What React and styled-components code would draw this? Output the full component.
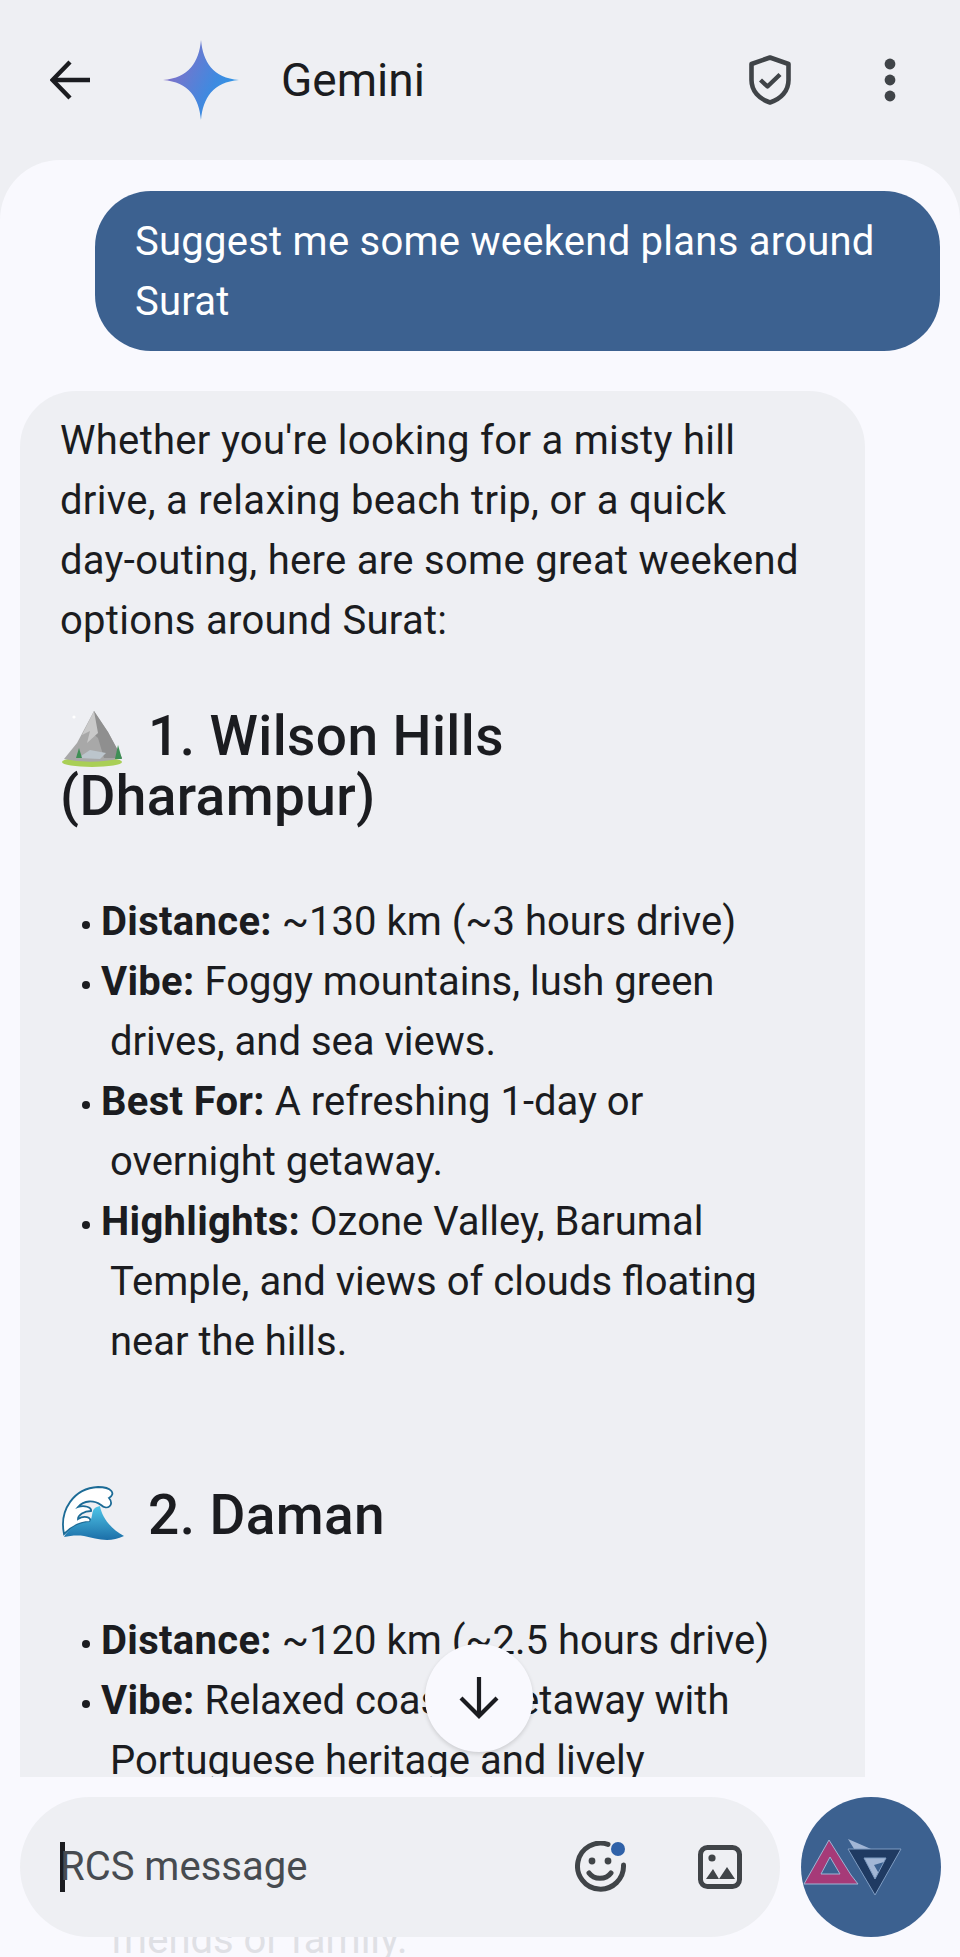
import React from "react";
import styled, { createGlobalStyle } from "styled-components";

const Global = createGlobalStyle`
  html, body { margin: 0; padding: 0; background: #eeeff3; }
  * { box-sizing: border-box; }
`;

const Page = styled.div`
  position: relative;
  width: 960px;
  height: 1957px;
  overflow: hidden;
  display: flex;
  flex-direction: column;
  background: #eeeff3;
  font-family: Roboto, Inter, sans-serif;
  color: #1b1c20;
`;

const Header = styled.header`
  height: 160px;
  flex: none;
  display: flex;
  align-items: center;
  padding-left: 50px;
`;

const IconSlot = styled.div`
  display: flex;
  flex: none;
  margin-left: ${(p) => p.$ml || 0}px;
  margin-right: ${(p) => p.$mr || 0}px;
`;

const Title = styled.h1`
  margin: 0 0 0 42px;
  font-size: 46px;
  line-height: 60px;
  font-weight: 400;
  flex: 1;
`;

const Sheet = styled.main`
  flex: 1;
  min-height: 0;
  overflow: hidden;
  background: #f9f9fe;
  border-radius: 60px 60px 0 0;
  padding: 31px 20px 0;
  display: flex;
  flex-direction: column;
  gap: 40px;
`;

const UserBubble = styled.div`
  align-self: flex-end;
  width: 845px;
  height: 160px;
  flex: none;
  padding: 21px 40px 19px;
  border-radius: 56px;
  background: #3c6190;
  color: #fff;
  font-size: 40px;
  line-height: 60px;
  letter-spacing: 0.25px;
`;

const BotBubble = styled.article`
  width: 845px;
  flex: none;
  padding: 20px 40px 40px;
  border-radius: 56px;
  background: #eeeff3;
  font-size: 40px;
  line-height: 60px;
`;

const Para = styled.p`
  margin: 0 0 55px;
  letter-spacing: 0.3px;
`;

const NoBreak = styled.span`
  white-space: nowrap;
`;

const Heading = styled.h2`
  margin: ${(p) => p.$mt || 0}px 0 66px;
  font-size: 55px;
  line-height: 60px;
  font-weight: 500;
  letter-spacing: 0.4px;
`;

const Emoji = styled.svg`
  display: inline-block;
  width: 64px;
  height: 64px;
  margin: -10px 24px -10px 0;
  vertical-align: -4px;
`;

const Bullets = styled.ul`
  list-style: none;
  margin: 0;
  padding: 0 40px 0 0;
`;

const Bullet = styled.li`
  padding-left: 50px;
  text-indent: -28px;
  &::before {
    content: "";
    display: inline-block;
    width: 8px;
    height: 8px;
    margin-right: 11px;
    border-radius: 50%;
    background: #1b1c20;
    vertical-align: 6px;
  }
  b {
    font-weight: 700;
    letter-spacing: 0.3px;
  }
`;

const Footer = styled.footer`
  position: absolute;
  left: 0;
  right: 0;
  bottom: 0;
  height: 180px;
  padding: 20px 20px 20px;
  background: #f9f9fe;
  display: flex;
  gap: 21px;
`;

const GhostLine = styled.div`
  position: absolute;
  left: 110px;
  top: 133px;
  font-size: 40px;
  line-height: 60px;
  color: #dfe0e5;
`;

const Composer = styled.div`
  position: relative;
  width: 760px;
  height: 140px;
  flex: none;
  border-radius: 70px;
  background: #eeeff3;
  display: flex;
  align-items: center;
  padding-left: 40px;
`;

const Caret = styled.span`
  width: 5px;
  height: 50px;
  flex: none;
  background: #1b1c20;
`;

const Placeholder = styled.span`
  flex: 1;
  margin-left: -5px;
  font-size: 40px;
  line-height: 60px;
  color: #474b50;
`;

const SendButton = styled.button`
  position: relative;
  width: 140px;
  height: 140px;
  flex: none;
  border: 0;
  padding: 0 38px 0 0;
  border-radius: 50%;
  background: #3c6190;
  display: flex;
  align-items: center;
  justify-content: center;
`;

const ScrollFab = styled.button`
  position: absolute;
  left: 425px;
  top: 1644px;
  width: 108px;
  height: 108px;
  border: 0;
  padding: 0;
  border-radius: 50%;
  background: #f9f9fe;
  box-shadow: 0 2px 4px rgba(0, 0, 0, 0.14);
  display: flex;
  align-items: center;
  justify-content: center;
`;

const Mountain = () => (
  <Emoji viewBox="0 0 64 64" aria-hidden="true">
    <ellipse cx="32" cy="57" rx="30" ry="5" fill="#a9cf56" />
    <path d="M4 54 L17 38 L34 6 L48 27 L62 53 Q32 60 4 54Z" fill="#a8a8a8" />
    <path d="M34 6 L48 27 L62 53 L44 53 L38 33 L30 26Z" fill="#8f8f8f" />
    <path d="M34 6 L22 30 L30 26 L27 38 L38 28Z" fill="#c9c9c9" />
    <path d="M18 53 L30 45 L46 48 L40 54Z" fill="#bcc5cc" />
    <path d="M55 54 L58 40 L62 54Z" fill="#3f8f55" />
    <path d="M16 53 L19 43 L22 53Z" fill="#3f8f55" />
    <circle cx="14" cy="12" r="1.6" fill="#fff" />
  </Emoji>
);

const Wave = () => (
  <Emoji viewBox="0 0 64 64" aria-hidden="true">
    <path d="M4 50 C-1 26 14 4 38 3 C52 3 56 10 49 14 C55 21 47 27 41 21 C34 16 24 16 18 23 C24 21 32 23 31 27 C24 27 18 31 18 35 C24 31 32 33 30 38 C22 38 12 42 4 50Z" fill="#fff" stroke="#1c6b96" strokeWidth="1.8" />
    <path d="M4 53 C10 42 22 38 30 38 C34 30 30 24 40 22 C42 34 52 46 64 52 C50 59 36 55 24 52 C16 51 10 52 4 53Z" fill="url(#sea)" />
    <defs>
      <linearGradient id="sea" x1="0" y1="0" x2="0" y2="1">
        <stop offset="0" stopColor="#4fc6e8" />
        <stop offset="1" stopColor="#1c6fa8" />
      </linearGradient>
    </defs>
  </Emoji>
);

export default function App() {
  return (
    <Page>
      <Global />
      <Header>
        <IconSlot>
          <svg width="40" height="40" viewBox="0 0 40 40" fill="none" stroke="#1b1c20" strokeWidth="4.4">
            <path d="M40 20 H4" />
            <path d="M20 2 L2.5 20 L20 38" />
          </svg>
        </IconSlot>
        <IconSlot $ml={73}>
          <svg width="76" height="80" viewBox="0 0 76 80">
            <defs>
              <linearGradient id="star" x1="0" y1="0.25" x2="1" y2="0.75">
                <stop offset="0" stopColor="#8d6cc4" />
                <stop offset="0.65" stopColor="#3f8ae0" />
                <stop offset="1" stopColor="#2b9ae8" />
              </linearGradient>
            </defs>
            <path d="M38 0 C40 22 50 38 76 40 C50 42 40 58 38 80 C36 58 26 42 0 40 C26 38 36 22 38 0Z" fill="url(#star)" />
          </svg>
        </IconSlot>
        <Title>Gemini</Title>
        <IconSlot>
          <svg width="42" height="50" viewBox="0 0 42 50" fill="none" stroke="#404448" strokeWidth="4.6" strokeLinejoin="round">
            <path d="M21 2.5 L39.5 9 V25 C39.5 36 32 44 21 47.5 C10 44 2.5 36 2.5 25 V9Z" />
            <path d="M11.5 25 L18.5 31.5 L31 19.5" strokeWidth="4.4" />
          </svg>
        </IconSlot>
        <IconSlot $ml={93} $mr={64}>
          <svg width="12" height="44" viewBox="0 0 12 44" fill="#404448">
            <circle cx="6" cy="6" r="5.4" />
            <circle cx="6" cy="22" r="5.4" />
            <circle cx="6" cy="38" r="5.4" />
          </svg>
        </IconSlot>
      </Header>
      <Sheet>
        <UserBubble>Suggest me some weekend plans around Surat</UserBubble>
        <BotBubble>
          <Para>
            Whether you're looking for a misty hill drive, a relaxing beach trip, or a quick <NoBreak>day-outing</NoBreak>, here are some great weekend options around Surat:
          </Para>
          <Heading>
            <Mountain />
            1. Wilson Hills (Dharampur)
          </Heading>
          <Bullets>
            <Bullet><b>Distance:</b> ~130 km (~3 hours drive)</Bullet>
            <Bullet><b>Vibe:</b> Foggy mountains, lush green drives, and sea views.</Bullet>
            <Bullet><b>Best For:</b> A refreshing 1-day or overnight getaway.</Bullet>
            <Bullet><b>Highlights:</b> Ozone Valley, Barumal Temple, and views of clouds floating near the hills.</Bullet>
          </Bullets>
          <Heading $mt={113}>
            <Wave />
            2. Daman
          </Heading>
          <Bullets>
            <Bullet><b>Distance:</b> ~120 km (~2.5 hours drive)</Bullet>
            <Bullet><b>Vibe:</b> Relaxed coastal getaway with Portuguese heritage and lively</Bullet>
          </Bullets>
        </BotBubble>
      </Sheet>
      <ScrollFab aria-label="Scroll to bottom">
        <svg width="40" height="42" viewBox="0 0 40 42" fill="none" stroke="#1b1c20" strokeWidth="4.2">
          <path d="M20 0 V38" />
          <path d="M2 21 L20 39 L38 21" />
        </svg>
      </ScrollFab>
      <Footer>
        <GhostLine>friends or family.</GhostLine>
        <Composer>
          <Caret />
          <Placeholder>RCS message</Placeholder>
          <IconSlot>
            <svg width="58" height="52" viewBox="0 0 58 52" fill="none" stroke="#404448" strokeWidth="5" strokeLinecap="round">
              <path d="M33 3.4 A23 23 0 1 0 48.5 24" />
              <circle cx="17" cy="20" r="3.4" fill="#404448" stroke="none" />
              <circle cx="33" cy="20" r="3.4" fill="#404448" stroke="none" />
              <path d="M14 32 C19 39 31 39 36 32" />
              <circle cx="43" cy="8" r="7" fill="#2f61a8" stroke="none" />
            </svg>
          </IconSlot>
          <IconSlot $ml={65} $mr={38}>
            <svg width="44" height="44" viewBox="0 0 44 44">
              <rect x="2.5" y="2.5" width="39" height="39" rx="7" fill="none" stroke="#404448" strokeWidth="5" />
              <circle cx="14" cy="13" r="3.6" fill="#404448" />
              <path d="M8 34 L15 24 L21 34Z M21 34 L29 22 L37 34Z" fill="#404448" />
            </svg>
          </IconSlot>
        </Composer>
        <SendButton aria-label="Send">
          <svg width="100" height="60" viewBox="0 0 100 60" fill="none">
            <path d="M2 47 L27 3 L49 38 L56 47 Z M19 37 L38 37 L28 20Z" fill="#a63a78" fillRule="evenodd" stroke="#9fb4d4" strokeWidth="1" />
            <path d="M46 2 L92 22 L72 28 L80 42 L68 50 L62 28Z" fill="#b4c6e2" opacity="0.85" />
            <path d="M46 12 L99 12 L73 58Z M62 21 L73 42 L84 21Z" fill="#1f3a62" fillRule="evenodd" stroke="#7f9cc2" strokeWidth="1" />
          </svg>
        </SendButton>
      </Footer>
    </Page>
  );
}
